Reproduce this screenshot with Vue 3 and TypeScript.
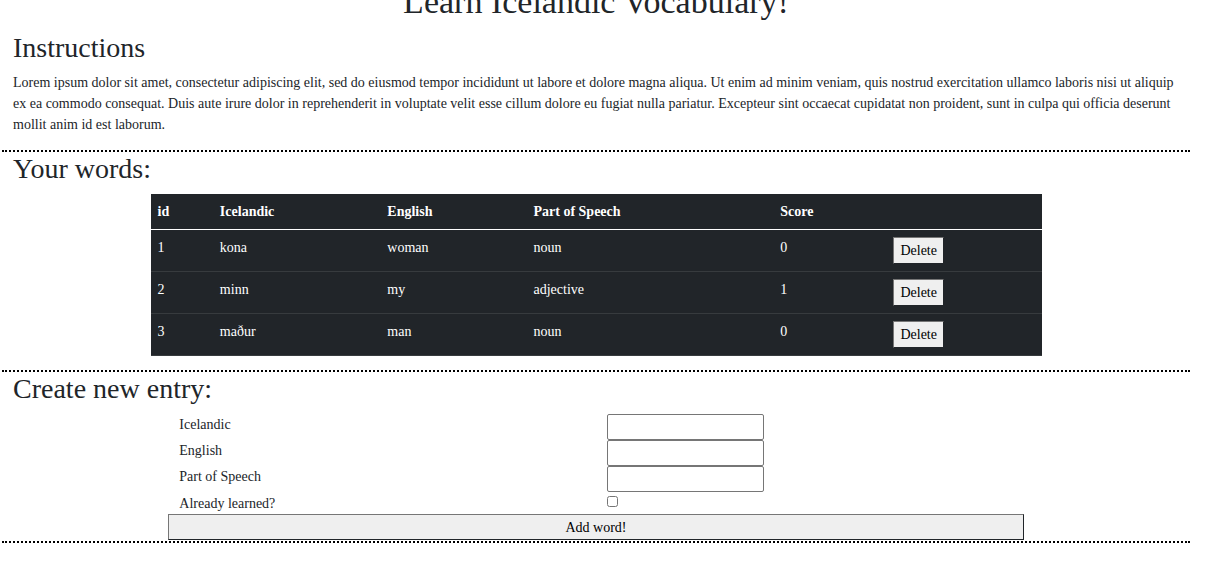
<script setup lang="ts">
import { reactive, ref } from 'vue'

interface Word {
  id: number
  icelandic: string
  english: string
  partOfSpeech: string
  score: number
}

const words = ref<Word[]>([
  { id: 1, icelandic: 'kona', english: 'woman', partOfSpeech: 'noun', score: 0 },
  { id: 2, icelandic: 'minn', english: 'my', partOfSpeech: 'adjective', score: 1 },
  { id: 3, icelandic: 'maður', english: 'man', partOfSpeech: 'noun', score: 0 },
])

const entry = reactive({ icelandic: '', english: '', partOfSpeech: '', learned: false })

function removeWord(id: number) {
  words.value = words.value.filter((word) => word.id !== id)
}

function addWord() {
  const nextId = Math.max(0, ...words.value.map((word) => word.id)) + 1
  words.value.push({
    id: nextId,
    icelandic: entry.icelandic,
    english: entry.english,
    partOfSpeech: entry.partOfSpeech,
    score: entry.learned ? 1 : 0,
  })
  Object.assign(entry, { icelandic: '', english: '', partOfSpeech: '', learned: false })
}
</script>

<template>
  <main class="page">
    <h1>Learn Icelandic Vocabulary!</h1>

    <section>
      <h2>Instructions</h2>
      <p>
        Lorem ipsum dolor sit amet, consectetur adipiscing elit, sed do eiusmod tempor incididunt ut
        labore et dolore magna aliqua. Ut enim ad minim veniam, quis nostrud exercitation ullamco
        laboris nisi ut aliquip ex ea commodo consequat. Duis aute irure dolor in reprehenderit in
        voluptate velit esse cillum dolore eu fugiat nulla pariatur. Excepteur sint occaecat
        cupidatat non proident, sunt in culpa qui officia deserunt mollit anim id est laborum.
      </p>
    </section>

    <section>
      <h2>Your words:</h2>
      <table>
        <colgroup>
          <col class="col-id" />
          <col class="col-icelandic" />
          <col class="col-english" />
          <col class="col-part" />
          <col class="col-score" />
          <col />
        </colgroup>
        <thead>
          <tr>
            <th scope="col">id</th>
            <th scope="col">Icelandic</th>
            <th scope="col">English</th>
            <th scope="col">Part of Speech</th>
            <th scope="col">Score</th>
            <th></th>
          </tr>
        </thead>
        <tbody>
          <tr v-for="word in words" :key="word.id">
            <td>{{ word.id }}</td>
            <td>{{ word.icelandic }}</td>
            <td>{{ word.english }}</td>
            <td>{{ word.partOfSpeech }}</td>
            <td>{{ word.score }}</td>
            <td><button type="button" @click="removeWord(word.id)">Delete</button></td>
          </tr>
        </tbody>
      </table>
    </section>

    <section class="create">
      <h2>Create new entry:</h2>
      <form @submit.prevent="addWord">
        <div class="field">
          <label for="icelandic">Icelandic</label>
          <div><input id="icelandic" v-model="entry.icelandic" type="text" /></div>
        </div>
        <div class="field">
          <label for="english">English</label>
          <div><input id="english" v-model="entry.english" type="text" /></div>
        </div>
        <div class="field">
          <label for="part">Part of Speech</label>
          <div><input id="part" v-model="entry.partOfSpeech" type="text" /></div>
        </div>
        <div class="field check">
          <label for="learned">Already learned?</label>
          <div><input id="learned" v-model="entry.learned" type="checkbox" /></div>
        </div>
        <button type="submit">Add word!</button>
      </form>
    </section>
  </main>
</template>

<style>
body {
  background: #fff;
}
</style>

<style scoped>
* {
  box-sizing: border-box;
}

/* The page sits scrolled slightly past the top of its title. */
.page {
  margin: -19px 16px 0 2px;
  color: #212529;
  font: 14px/21px "Liberation Serif", "Times New Roman", serif;
}

h1,
h2 {
  margin: 0;
  font-weight: 400;
}

h1 {
  padding-bottom: 8px;
  font-size: 34px;
  line-height: 42px;
  text-align: center;
}

h2 {
  padding: 0 11px 8px;
  font-size: 28px;
  line-height: 34px;
}

section {
  border-bottom: 2px dotted #000;
}

p {
  margin: -1px 0 15px;
  padding: 0 11px;
}

table {
  width: 75%;
  margin: 0 auto 14px;
  table-layout: fixed;
  border-spacing: 0;
  background: #212529;
  color: #fff;
}

.col-id {
  width: 7%;
}

.col-icelandic {
  width: 18.8%;
}

.col-english {
  width: 16.4%;
}

.col-part {
  width: 27.7%;
}

.col-score {
  width: 12.7%;
}

th,
td {
  padding: 7px;
  text-align: left;
  vertical-align: top;
  border-bottom: 1px solid #373b3e;
}

th {
  border-bottom-color: #fff;
}

button {
  height: 26px;
  padding: 0 6px;
  border: 1px solid;
  border-color: #767676 #212529 #212529 #767676;
  background: #efefef;
  color: #000;
  font: inherit;
}

td button {
  display: block;
  height: 27px;
}

.create {
  padding-bottom: 1px;
}

form {
  display: flex;
  flex-direction: column;
  width: 72%;
  margin: 0 auto;
}

.field {
  display: grid;
  grid-template-columns: 1fr 1fr;
}

.field > * {
  padding: 0 11px;
}

.check {
  padding-top: 1px;
}

input {
  display: block;
  margin: 0;
}

input[type='text'] {
  width: 157px;
  height: 26px;
  padding: 1px 2px;
  border: 1px solid #767676;
  border-radius: 2px;
  background: #fff;
  font: inherit;
}

input[type='checkbox'] {
  width: 11px;
  height: 11px;
  margin-top: 3px;
}
</style>
